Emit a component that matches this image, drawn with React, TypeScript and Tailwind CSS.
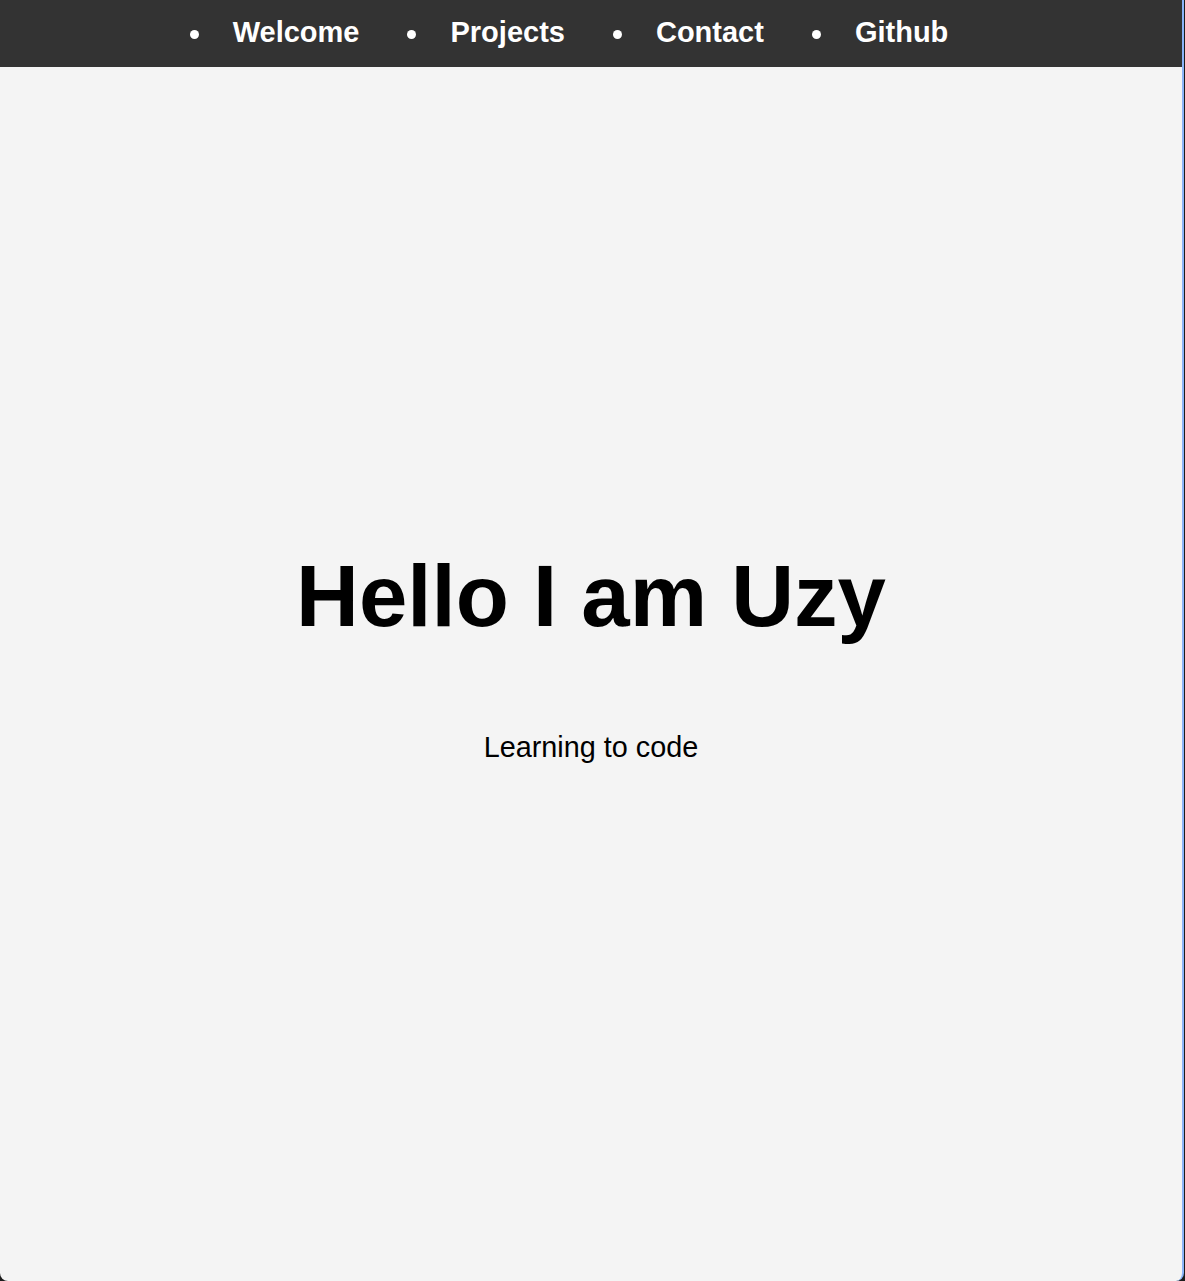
import React from "react";

const items = ["Welcome", "Projects", "Contact", "Github"];

export default function App() {
  return (
    <div className="flex h-[1281px] w-full bg-[#1c1c1c] pr-[1px]" style={{ fontFamily: '"Liberation Sans", Arial, sans-serif' }}>
      <div className="flex flex-1 flex-col overflow-hidden rounded-b-[8px] border-r-2 border-[#8ab4f8] bg-[#f4f4f4]">
        <nav className="flex h-[67px] items-center justify-center bg-[#333333] pb-[2px] pr-[44px]">
          <ul className="flex items-center gap-[48px]">
            {items.map((t) => (
              <li key={t} className="flex items-center gap-[34px]">
                <span className="mt-[4px] block h-[9px] w-[9px] rounded-full bg-white" />
                <a className="text-[29px] font-bold text-white">{t}</a>
              </li>
            ))}
          </ul>
        </nav>
        <main className="flex flex-col items-center pt-[485px] text-black">
          <h1 className="text-[87px] font-bold leading-none">Hello I am Uzy</h1>
          <p className="mt-[94px] text-[28.8px] leading-none">Learning to code</p>
        </main>
      </div>
    </div>
  );
}
